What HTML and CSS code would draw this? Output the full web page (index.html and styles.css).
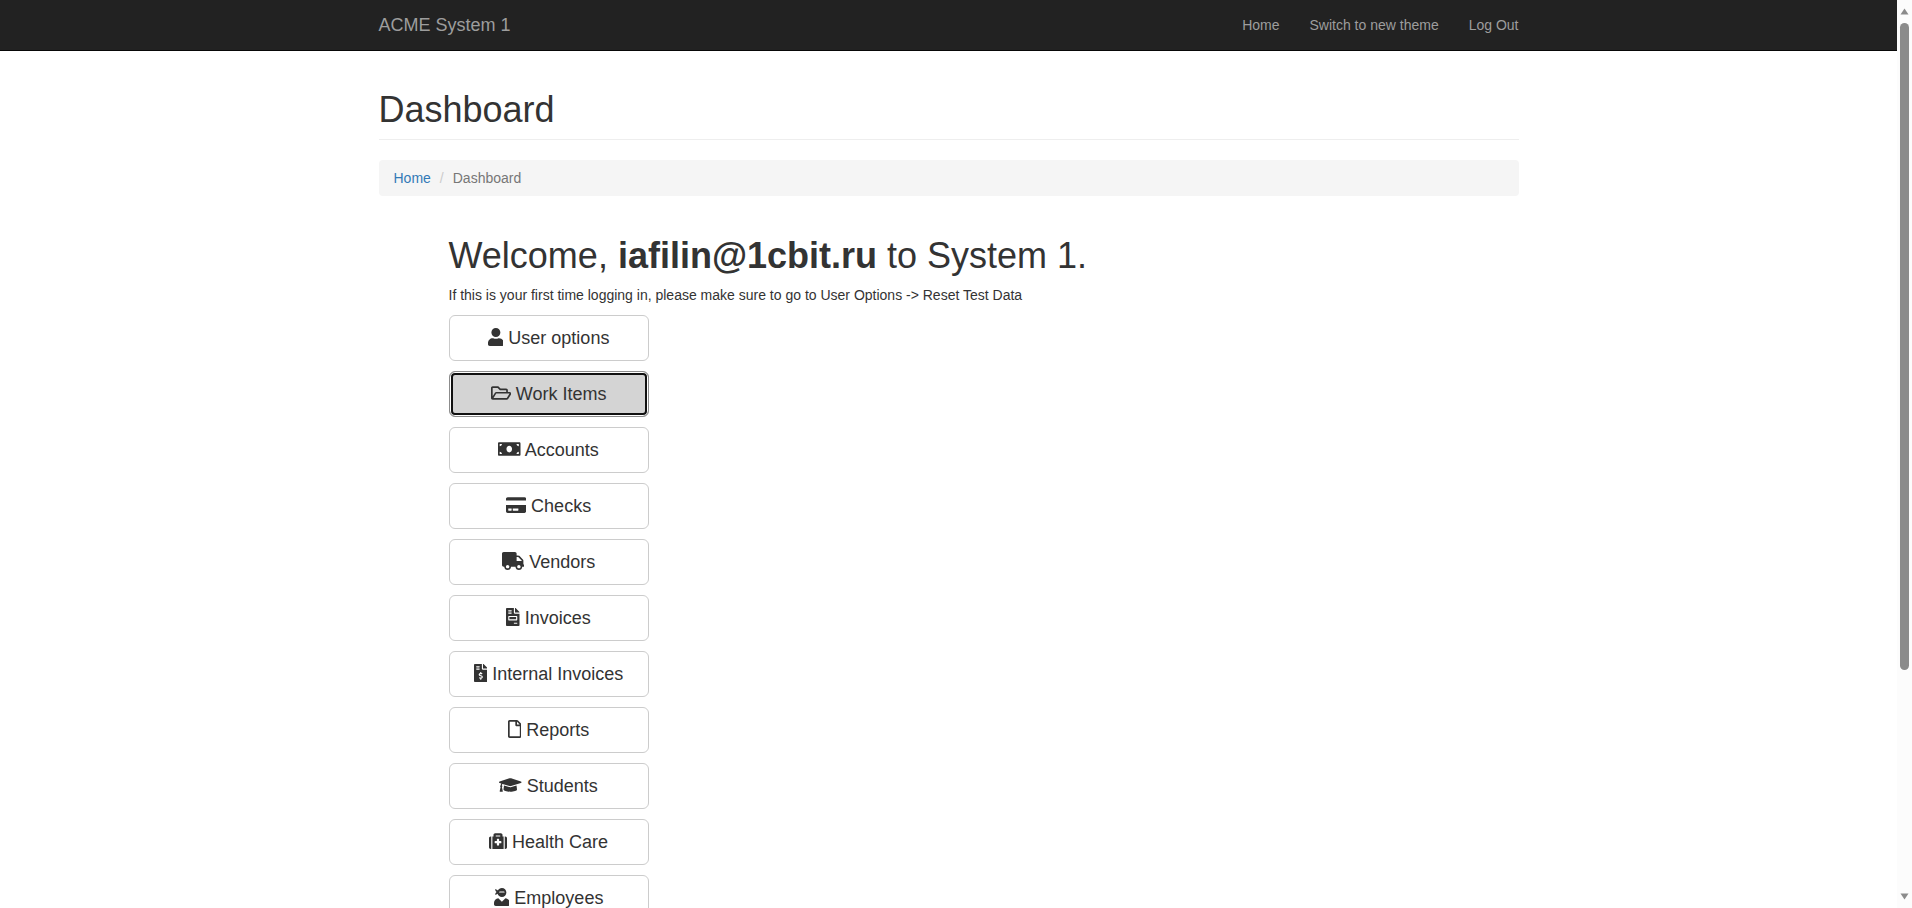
FILE: index.html
```html
<!DOCTYPE html>
<html lang="en">
<head>
<meta charset="utf-8">
<title>ACME System 1 - Dashboard</title>
<link rel="stylesheet" href="styles.css">
</head>
<body>
<div class="page">
  <nav class="navbar">
    <div class="container navbar-inner">
      <a class="brand" href="#">ACME System 1</a>
      <div class="nav-links">
        <a href="#">Home</a>
        <a href="#">Switch to new theme</a>
        <a href="#">Log Out</a>
      </div>
    </div>
  </nav>
  <main class="container">
    <h1 class="page-header">Dashboard</h1>
    <ol class="breadcrumb">
      <li><a href="#">Home</a></li>
      <li>Dashboard</li>
    </ol>
    <section class="welcome">
      <h1>Welcome, <b>iafilin@1cbit.ru</b> to System 1.</h1>
      <p>If this is your first time logging in, please make sure to go to User Options -&gt; Reset Test Data</p>
      <div class="menu">
        <button type="button" class="btn"><svg class="icon" viewBox="0 0 448 512"><path d="M224 256c70.7 0 128-57.3 128-128S294.7 0 224 0 96 57.3 96 128s57.3 128 128 128zm89.6 32h-16.7c-22.2 10.2-46.9 16-72.9 16s-50.6-5.8-72.9-16h-16.7C60.2 288 0 348.2 0 422.4V464c0 26.5 21.5 48 48 48h352c26.5 0 48-21.5 48-48v-41.6c0-74.2-60.2-134.4-134.4-134.4z"/></svg> User options</button>
        <button type="button" class="btn active"><svg class="icon" viewBox="0 0 576 512"><path d="M527.9 224H480v-48c0-26.5-21.5-48-48-48H272l-64-64H48C21.5 64 0 85.5 0 112v288c0 26.5 21.5 48 48 48h400c16.5 0 31.9-8.5 40.7-22.6l79.9-128c20-31.9-3-73.4-40.7-73.4zM48 118c0-3.3 2.7-6 6-6h134.1l64 64H426c3.3 0 6 2.7 6 6v42H152c-16.8 0-32.4 8.8-41.1 23.2L48 351.4zm400 282H72l77.2-128H528z"/></svg> Work Items</button>
        <button type="button" class="btn"><svg class="icon" viewBox="0 0 640 512"><path d="M608 64H32C14.33 64 0 78.33 0 96v320c0 17.67 14.33 32 32 32h576c17.67 0 32-14.33 32-32V96c0-17.67-14.33-32-32-32zM48 400v-64c35.35 0 64 28.65 64 64H48zm0-224v-64h64c0 35.35-28.65 64-64 64zm272 176c-44.19 0-80-42.99-80-96 0-53.02 35.82-96 80-96s80 42.98 80 96c0 53.03-35.83 96-80 96zm272 48h-64c0-35.35 28.65-64 64-64v64zm0-224c-35.35 0-64-28.65-64-64h64v64z"/></svg> Accounts</button>
        <button type="button" class="btn"><svg class="icon" viewBox="0 0 576 512"><path d="M0 432c0 26.5 21.5 48 48 48h480c26.5 0 48-21.5 48-48V256H0v176zm192-68c0-6.6 5.4-12 12-12h136c6.6 0 12 5.4 12 12v40c0 6.6-5.4 12-12 12H204c-6.6 0-12-5.4-12-12v-40zm-128 0c0-6.6 5.4-12 12-12h72c6.6 0 12 5.4 12 12v40c0 6.6-5.4 12-12 12H76c-6.6 0-12-5.4-12-12v-40zM576 80v48H0V80c0-26.5 21.5-48 48-48h480c26.5 0 48 21.5 48 48z"/></svg> Checks</button>
        <button type="button" class="btn"><svg class="icon" viewBox="0 0 640 512"><path d="M624 352h-16V243.9c0-12.7-5.1-24.9-14.1-33.9L494 110.1c-9-9-21.2-14.1-33.9-14.1H416V48c0-26.5-21.5-48-48-48H48C21.5 0 0 21.5 0 48v320c0 26.5 21.5 48 48 48h16c0 53 43 96 96 96s96-43 96-96h128c0 53 43 96 96 96s96-43 96-96h48c8.8 0 16-7.2 16-16v-32c0-8.8-7.2-16-16-16zM160 464c-26.5 0-48-21.5-48-48s21.5-48 48-48 48 21.5 48 48-21.5 48-48 48zm320 0c-26.5 0-48-21.5-48-48s21.5-48 48-48 48 21.5 48 48-21.5 48-48 48zm80-208H416V144h44.1l99.9 99.9V256z"/></svg> Vendors</button>
        <button type="button" class="btn"><svg class="icon" viewBox="0 0 384 512"><path d="M288 256H96v64h192v-64zm89-151L279.1 7c-4.5-4.5-10.6-7-17-7H256v128h128v-6.1c0-6.3-2.5-12.4-7-16.9zm-153 31V0H24C10.7 0 0 10.7 0 24v464c0 13.3 10.7 24 24 24h336c13.3 0 24-10.7 24-24V160H248c-13.2 0-24-10.8-24-24zM64 72c0-4.42 3.58-8 8-8h80c4.42 0 8 3.58 8 8v16c0 4.42-3.58 8-8 8H72c-4.42 0-8-3.58-8-8V72zm0 64c0-4.42 3.58-8 8-8h80c4.42 0 8 3.58 8 8v16c0 4.42-3.58 8-8 8H72c-4.42 0-8-3.58-8-8v-16zm256 304c0 4.42-3.58 8-8 8h-80c-4.42 0-8-3.58-8-8v-16c0-4.42 3.58-8 8-8h80c4.42 0 8 3.58 8 8v16zm0-200v96c0 8.84-7.16 16-16 16H80c-8.84 0-16-7.16-16-16v-96c0-8.84 7.16-16 16-16h224c8.84 0 16 7.16 16 16z"/></svg> Invoices</button>
        <button type="button" class="btn"><svg class="icon" viewBox="0 0 384 512"><path d="M377 105L279.1 7c-4.5-4.5-10.6-7-17-7H256v128h128v-6.1c0-6.3-2.5-12.4-7-16.9zm-153 31V0H24C10.7 0 0 10.7 0 24v464c0 13.3 10.7 24 24 24h336c13.3 0 24-10.7 24-24V160H248c-13.2 0-24-10.8-24-24zM64 72c0-4.42 3.58-8 8-8h80c4.42 0 8 3.58 8 8v16c0 4.42-3.58 8-8 8H72c-4.42 0-8-3.58-8-8V72zm0 80v-16c0-4.42 3.58-8 8-8h80c4.42 0 8 3.58 8 8v16c0 4.42-3.58 8-8 8H72c-4.42 0-8-3.58-8-8zm144 263.88V440c0 4.42-3.58 8-8 8h-16c-4.42 0-8-3.58-8-8v-24.29c-11.29-.58-22.27-4.52-31.37-11.35-3.9-2.93-4.1-8.77-.57-12.14l11.75-11.21c2.77-2.64 6.89-2.76 10.13-.73 3.87 2.42 8.26 3.72 12.82 3.72h28.11c6.5 0 11.8-5.92 11.8-13.19 0-5.95-3.61-11.19-8.77-12.73l-45-13.5c-18.59-5.58-31.58-23.42-31.58-43.39 0-24.52 19.05-44.44 42.67-45.07V232c0-4.42 3.58-8 8-8h16c4.42 0 8 3.58 8 8v24.29c11.29.58 22.27 4.51 31.37 11.35 3.9 2.93 4.1 8.77.57 12.14l-11.75 11.21c-2.77 2.64-6.89 2.76-10.13.73-3.87-2.43-8.26-3.72-12.82-3.72h-28.11c-6.5 0-11.8 5.92-11.8 13.19 0 5.95 3.61 11.19 8.77 12.73l45 13.5c18.59 5.58 31.58 23.42 31.58 43.39 0 24.53-19.05 44.44-42.67 45.07z"/></svg> Internal Invoices</button>
        <button type="button" class="btn"><svg class="icon" viewBox="0 0 384 512"><path d="M369.9 97.9L286 14C277 5 264.8-.1 252.1-.1H48C21.5 0 0 21.5 0 48v416c0 26.5 21.5 48 48 48h288c26.5 0 48-21.5 48-48V131.9c0-12.7-5.1-25-14.1-34zM332.1 128H256V51.9l76.1 76.1zM48 464V48h160v104c0 13.3 10.7 24 24 24h104v288H48z"/></svg> Reports</button>
        <button type="button" class="btn"><svg class="icon" viewBox="0 0 640 512"><path d="M622.34 153.2L343.4 67.5c-15.2-4.67-31.6-4.67-46.79 0L17.66 153.2c-23.54 7.23-23.54 38.36 0 45.59l48.63 14.94c-10.67 13.19-17.23 29.28-17.88 46.9C38.78 266.15 32 276.11 32 288c0 10.78 5.68 19.85 13.86 25.65L20.33 428.53C18.11 438.52 25.71 448 35.94 448h56.11c10.24 0 17.84-9.48 15.62-19.47L82.14 313.65C90.32 307.85 96 298.78 96 288c0-11.57-6.47-21.25-15.66-26.87.76-15.02 8.44-28.3 20.69-36.72L296.6 284.5c9.06 2.78 26.44 6.25 46.79 0l278.95-85.7c23.55-7.24 23.55-38.36 0-45.6zM352.79 315.09c-28.53 8.76-52.84 3.92-65.59 0l-145.02-44.55L128 384c0 35.35 85.96 64 192 64s192-28.65 192-64l-14.18-113.47-145.03 44.56z"/></svg> Students</button>
        <button type="button" class="btn"><svg class="icon" viewBox="0 0 512 512"><path d="M96 480h320V128h-32V80c0-26.51-21.49-48-48-48H176c-26.51 0-48 21.49-48 48v48H96v352zm96-384h128v32H192V96zm320 80v256c0 26.51-21.49 48-48 48h-16V128h16c26.51 0 48 21.49 48 48zM64 480H48c-26.51 0-48-21.49-48-48V176c0-26.51 21.49-48 48-48h16v352zm288-208v32c0 8.837-7.163 16-16 16h-48v48c0 8.837-7.163 16-16 16h-32c-8.837 0-16-7.163-16-16v-48h-48c-8.837 0-16-7.163-16-16v-32c0-8.837 7.163-16 16-16h48v-48c0-8.837 7.163-16 16-16h32c8.837 0 16 7.163 16 16v48h48c8.837 0 16 7.163 16 16z"/></svg> Health Care</button>
        <button type="button" class="btn"><svg class="icon" viewBox="0 0 448 512"><path d="M325.4 289.2L224 390.6 122.6 289.2C54 295.3 0 352.2 0 422.4V464c0 26.5 21.5 48 48 48h352c26.5 0 48-21.5 48-48v-41.6c0-70.2-54-127.1-122.6-133.2zM32 192c27.3 0 51.8-11.5 69.2-29.7 15.1 53.9 64 93.7 122.8 93.7 70.7 0 128-57.3 128-128S294.7 0 224 0c-50.4 0-93.6 29.4-114.5 71.8C92.1 47.8 64 32 32 32c0 33.4 17.1 62.8 43.1 80-26 17.2-43.1 46.6-43.1 80zm144-96h96c17.7 0 32 14.3 32 32H144c0-17.7 14.3-32 32-32z"/></svg> Employees</button>
      </div>
    </section>
  </main>
</div>
<div class="scrollbar" aria-hidden="true">
  <svg class="arrow" viewBox="0 0 9 7"><path d="M4.500 0.500 8.500 6.500H.5z"/></svg>
  <div class="track"><div class="thumb"></div></div>
  <svg class="arrow" viewBox="0 0 9 7"><path d="M4.500 6.500 8.500 .5H.5z"/></svg>
</div>
</body>
</html>
```

FILE: styles.css
```css
* {
  box-sizing: border-box;
}

body {
  display: grid;
  grid-template-columns: minmax(0, 1fr) 15px;
  height: 100vh;
  margin: 0;
  overflow: hidden;
  background: #fff;
  color: #333;
  font-family: "Liberation Sans", Arial, sans-serif;
  font-size: 14px;
  line-height: 20px;
}

a {
  color: #337ab7;
  text-decoration: none;
}

.page {
  min-height: 0;
  overflow: hidden;
}

.container {
  max-width: 1170px;
  margin: 0 auto;
  padding: 0 15px;
}

.navbar {
  background: #222;
  border-bottom: 1px solid #080808;
}

.navbar-inner {
  display: flex;
  align-items: center;
  justify-content: space-between;
  min-height: 50px;
}

.navbar a {
  color: #9d9d9d;
}

.brand {
  font-size: 18px;
}

.nav-links {
  display: flex;
  gap: 30px;
}

h1 {
  margin: 0;
  font-size: 36px;
  font-weight: 500;
  line-height: 40px;
}

.page-header {
  margin: 39px 0 20px;
  padding-bottom: 9px;
  border-bottom: 1px solid #eee;
}

.breadcrumb {
  display: flex;
  margin: 0 0 40px;
  padding: 8px 15px;
  border-radius: 4px;
  background: #f5f5f5;
  color: #777;
  list-style: none;
}

.breadcrumb li + li::before {
  content: "/";
  padding: 0 9px;
  color: #ccc;
}

.welcome {
  padding-left: 70px;
}

.welcome p {
  margin: 9px 0 10px;
}

.menu {
  display: flex;
  flex-direction: column;
  gap: 10px;
  width: 200px;
}

.btn {
  padding: 10px 16px;
  border: 1px solid #ccc;
  border-radius: 6px;
  background: #fff;
  color: #333;
  font-family: inherit;
  font-size: 18px;
  line-height: 24px;
  white-space: nowrap;
}

.btn.active {
  border-color: #8c8c8c;
  background: #d4d4d4;
  box-shadow: inset 0 0 0 1px #fff, inset 0 0 0 3px #101010;
}

.icon {
  height: 18px;
  vertical-align: -2px;
  fill: currentColor;
}

.scrollbar {
  display: flex;
  flex-direction: column;
  align-items: center;
  gap: 8px;
  padding: 8px 0;
  background: #fcfcfc;
}

.arrow {
  width: 9px;
  height: 7px;
  fill: #8b8b8b;
}

.track {
  flex: 1;
  width: 9px;
}

.thumb {
  height: 75%;
  border-radius: 5px;
  background: #8b8b8b;
}
```
